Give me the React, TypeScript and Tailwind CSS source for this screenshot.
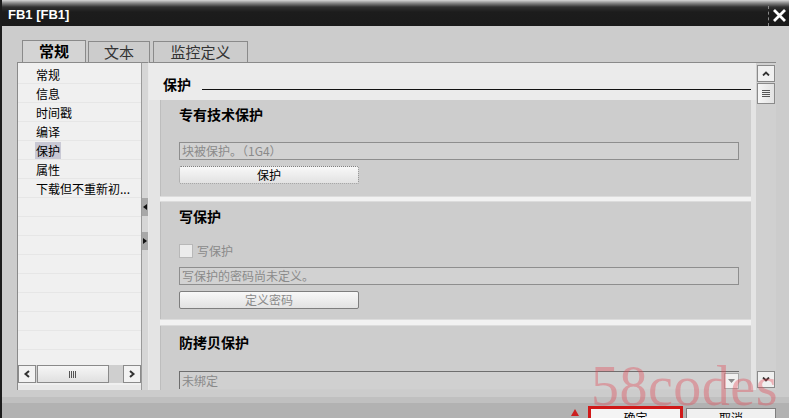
import React from "react";

const F = "font-['Liberation_Sans','Noto_Sans_CJK_SC',sans-serif]";
const CJK = "font-['Noto_Sans_CJK_SC',sans-serif]";

function Section({ title, height, top = 4, children }: { title: string; height: number; top?: number; children?: React.ReactNode }) {
  return (
    <div
      className="ml-[11px] mr-[5px] bg-[#cdcdcd] border-l border-[#bdbdbd] flex flex-col pl-[18px] pr-[12px]"
      style={{ height }}
    >
      <div className={`${CJK} text-[14px] font-bold text-black leading-[20px] h-[20px]`} style={{ marginTop: top }}>{title}</div>
      {children}
    </div>
  );
}

function Sep({ h = 6 }: { h?: number }) {
  return (
    <div className="ml-[11px] mr-[5px] bg-[#f2f2f2] border-t border-b border-[#dcdcdc]" style={{ height: h }} />
  );
}

function GrayInput({ text }: { text: string }) {
  return (
    <div className={`${CJK} h-[18px] border border-[#8e8e8e] bg-[#d2d2d2] text-[12px] leading-[16px] text-[#8a8a8a] pl-[2px]`}>
      {text}
    </div>
  );
}

function Btn({ text, disabled }: { text: string; disabled?: boolean }) {
  return (
    <div
      className={`${CJK} w-[180px] h-[18px] border border-[#7e7e7e] rounded-[2px] bg-[linear-gradient(to_bottom,#f8f8f8,#e2e2e2)] text-[12px] leading-[16px] text-center ${disabled ? "text-[#8a8a8a]" : "text-black border-dotted"}`}
    >
      {text}
    </div>
  );
}

export default function App() {
  const items = ["常规", "信息", "时间戳", "编译", "保护", "属性", "下载但不重新初..."];
  return (
    <div className={`w-[792px] h-[418px] bg-white overflow-hidden relative ${F}`}>
      <div className="w-[789px] h-[418px] border-l-2 border-[#1c1c1c] bg-[#cccccc] flex flex-col">
        {/* title bar */}
        <div className="h-[26px] shrink-0 flex items-center bg-[linear-gradient(to_bottom,#d8d8d8_0px,#8a8a8a_3px,#303030_7px,#1c1c1c_12px,#1a1a1a_100%)]">
          <span className="ml-[6px] mt-[3px] text-white text-[13px] font-bold leading-none">FB1 [FB1]</span>
          <div className="ml-auto mr-[0px] mt-[5px] w-[21px] h-[20px] border-l border-dashed border-[#8a8a8a] flex items-center justify-center">
            <svg width="15" height="15" viewBox="0 0 15 15">
              <path d="M2 2 L13 13 M13 2 L2 13" stroke="white" strokeWidth="2.8" />
            </svg>
          </div>
        </div>

        {/* tabs */}
        <div className="h-[14px] shrink-0" />
        <div className="h-[22px] shrink-0 flex items-end pl-[20px] gap-[2px]">
          <div className={`${CJK} w-[64px] h-[22px] border border-b-0 border-[#8a8a8a] bg-[#d4d4d4] text-[15px] font-bold text-center leading-[20px]`}>常规</div>
          <div className={`${CJK} w-[62px] h-[21px] border border-b-0 border-[#8a8a8a] bg-[#cccccc] text-[15px] text-[#333] text-center leading-[20px]`}>文本</div>
          <div className={`${CJK} w-[95px] h-[21px] border border-b-0 border-[#8a8a8a] bg-[#cccccc] text-[15px] text-[#333] text-center leading-[20px] ml-[1px]`}>监控定义</div>
        </div>

        {/* content */}
        <div className="h-[328px] shrink-0 flex pl-[15px]">
          {/* left list */}
          <div className="w-[124px] h-full border-t border-l border-[#8a8a8a] bg-[#f0f0f0] flex flex-col">
            <div className="flex-1 pt-[2px] overflow-hidden">
              {items.map((t, i) => (
                <div key={i} className="h-[19px] border-b border-[#e6e6e6] pl-[17px] flex items-center">
                  <span className={`${CJK} text-[12px] leading-[17px] text-black px-[1px] ${t === "保护" ? "bg-[#c8c8d4]" : ""}`}>{t}</span>
                </div>
              ))}
              {Array.from({ length: 9 }).map((_, i) => (
                <div key={"e" + i} className="h-[19px] border-b border-[#e6e6e6]" />
              ))}
            </div>
            <div className="h-[18px] mb-[2px] flex items-center bg-[#cfcfcf] gap-[1px]">
              <div className="w-[18px] h-[18px] border border-[#8a8a8a] bg-[#f2f2f2] flex items-center justify-center">
                <svg width="8" height="8" viewBox="0 0 8 8"><path d="M6 1 L2.5 4 L6 7" stroke="#333" strokeWidth="2" fill="none" /></svg>
              </div>
              <div className="w-[72px] h-[18px] border border-[#8a8a8a] bg-[linear-gradient(to_bottom,#f6f6f6,#e0e0e0)] flex items-center justify-center">
                <svg width="8" height="7" viewBox="0 0 8 7"><path d="M0.5 0 V7 M2.5 0 V7 M4.5 0 V7 M6.5 0 V7" stroke="#555" strokeWidth="1" /></svg>
              </div>
              <div className="flex-1" />
              <div className="w-[18px] h-[18px] border border-[#8a8a8a] bg-[#f2f2f2] flex items-center justify-center">
                <svg width="8" height="8" viewBox="0 0 8 8"><path d="M2 1 L5.5 4 L2 7" stroke="#333" strokeWidth="2" fill="none" /></svg>
              </div>
            </div>
            <div className="h-[5px] bg-[#e8e8e8]" />
          </div>

          {/* splitter */}
          <div className="w-[8px] h-full border-t border-[#8a8a8a] bg-[#d6d6d6] border-l border-r border-l-[#9a9a9a] border-r-[#e8e8e8] flex flex-col">
            <div className="h-[135px]" />
            <div className="h-[18px] bg-[#a8a8a8] flex items-center justify-center">
              <svg width="4" height="6" viewBox="0 0 4 6"><path d="M4 0 L0 3 L4 6Z" fill="#111" /></svg>
            </div>
            <div className="h-[16px]" />
            <div className="h-[18px] bg-[#a8a8a8] flex items-center justify-center">
              <svg width="4" height="6" viewBox="0 0 4 6"><path d="M0 0 L4 3 L0 6Z" fill="#111" /></svg>
            </div>
          </div>

          {/* right panel */}
          <div className="w-[607px] h-full border-t border-[#8a8a8a] bg-[#e4e4e4] flex flex-col overflow-hidden">
            <div className="h-[37px] shrink-0 bg-[#ebebeb] flex items-end pl-[14px] pb-[6px] pr-[5px]">
              <span className={`${CJK} text-[14px] font-bold leading-[20px]`}>保护</span>
              <div className="flex-1 h-px bg-[#111] ml-[11px] mb-[4px]" />
            </div>
            <Section title="专有技术保护" height={97}>
              <div className="h-[18px]" />
              <GrayInput text="块被保护。（1G4）" />
              <div className="h-[6px]" />
              <Btn text="保护" />
            </Section>
            <Sep />
            <Section title="写保护" height={118}>
              <div className="h-[17px]" />
              <div className="h-[16px] flex items-center gap-[4px]">
                <div className="w-[14px] h-[14px] border border-[#b8b8b8] bg-[#ececec]" />
                <span className={`${CJK} text-[12px] text-[#8a8a8a] leading-[16px]`}>写保护</span>
              </div>
              <div className="h-[8px]" />
              <GrayInput text="写保护的密码尚未定义。" />
              <div className="h-[6px]" />
              <Btn text="定义密码" disabled />
            </Section>
            <Sep h={7} />
            <Section title="防拷贝保护" height={64} top={6}>
              <div className="h-[19px]" />
              <div className="h-[18px] shrink-0 border-t border-l border-[#6e6e6e] bg-[#d0d0d0] flex items-center">
                <span className={`${CJK} text-[12px] text-[#8a8a8a] leading-[16px] pl-[2px]`}>未绑定</span>
                <div className="ml-auto w-[15px] h-[16px] border border-[#a8a8a8] bg-[#f0f0f0] flex items-center justify-center">
                  <svg width="7" height="4" viewBox="0 0 7 4"><path d="M0 0 H7 L3.5 4Z" fill="#888" /></svg>
                </div>
              </div>
            </Section>
          </div>

          {/* vertical scrollbar */}
          <div className="w-[20px] h-full border-t border-[#8a8a8a] bg-[#d0d0d0] flex flex-col pt-[2px] pb-[2px] pl-[1px]">
            <div className="w-[18px] h-[17px] border border-[#8a8a8a] bg-[#f0f0f0] flex items-center justify-center">
              <svg width="8" height="5" viewBox="0 0 8 5"><path d="M1 4.5 L4 1.5 L7 4.5" stroke="#333" strokeWidth="1.8" fill="none" /></svg>
            </div>
            <div className="w-[18px] h-[21px] mt-[1px] border border-[#8a8a8a] bg-[linear-gradient(to_right,#f6f6f6,#e2e2e2)] flex items-center justify-center">
              <svg width="8" height="7" viewBox="0 0 8 7"><path d="M0 0.5 H8 M0 2.5 H8 M0 4.5 H8 M0 6.5 H8" stroke="#555" strokeWidth="1" /></svg>
            </div>
            <div className="flex-1" />
            <div className="w-[18px] h-[17px] border border-[#8a8a8a] bg-[#f0f0f0] flex items-center justify-center">
              <svg width="8" height="5" viewBox="0 0 8 5"><path d="M1 0.5 L4 3.5 L7 0.5" stroke="#333" strokeWidth="1.8" fill="none" /></svg>
            </div>
          </div>
        </div>

        {/* bottom */}
        <div className="h-[7px] shrink-0 bg-[#cccccc]" />
        <div className="h-[6px] shrink-0 bg-[#c0c0c0]" />
        <div className="flex-1 bg-[#b2b2b2] relative">
          <div className="absolute left-[569px] top-[6px] w-0 h-0 border-l-[4px] border-r-[4px] border-b-[7px] border-l-transparent border-r-transparent border-b-[#cc2020]" />
          <div className="absolute left-[586px] top-[3px] w-[95px] h-[26px] border-[3px] border-[#d01818] bg-[#f4f4f4] flex justify-center">
            <span className={`${CJK} text-[12px] leading-none mt-[3px]`}>确定</span>
          </div>
          <div className="absolute left-[684px] top-[5px] w-[90px] h-[24px] border border-[#7e7e7e] bg-[#f0f0f0] flex justify-center">
            <span className={`${CJK} text-[12px] leading-none mt-[3px]`}>取消</span>
          </div>
        </div>
      </div>

      {/* watermark */}
      <div className="absolute left-[591px] top-[358px] font-['Liberation_Serif',serif] text-[56px] leading-none text-[rgba(225,70,85,0.38)] tracking-[0.5px] pointer-events-none">
        58codes
      </div>
    </div>
  );
}
